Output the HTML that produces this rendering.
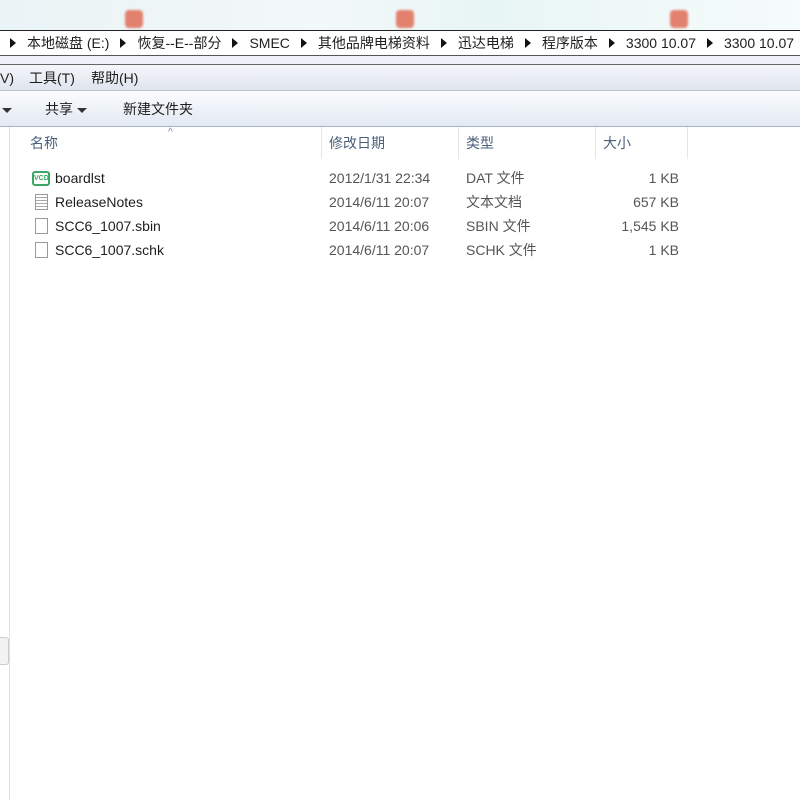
<!DOCTYPE html>
<html><head><meta charset="utf-8"><style>
body{margin:0;width:800px;height:800px;overflow:hidden;background:#fff;font-family:"Liberation Sans","Noto Sans CJK SC",sans-serif;font-size:14px;color:#1e1e1e;position:relative}
.a{position:absolute;white-space:nowrap}
.tri{display:inline-block;width:0;height:0;border-top:5px solid transparent;border-bottom:5px solid transparent;border-left:6px solid #111;margin:0 11px}
.dn{display:inline-block;border-left:5px solid transparent;border-right:5px solid transparent;border-top:5px solid #333;vertical-align:middle}
.row{position:absolute;left:0;height:24px;line-height:24px;width:800px}
.row span{position:absolute}
.ic{position:absolute;left:35px;top:4px;width:13px;height:16px;border:1px solid #999;background:#fff;box-sizing:border-box}
</style></head><body>
<div class="a" style="left:0;top:0;width:800px;height:30px;background:linear-gradient(90deg,#eaf3f6,#f3f8f8 40%,#e8f5f5 60%,#f6fbfb)"></div>
<div class="a" style="left:125px;top:10px;width:18px;height:18px;background:#e2826e;border-radius:4px;filter:blur(1px)"></div>
<div class="a" style="left:396px;top:10px;width:18px;height:18px;background:#e2826e;border-radius:4px;filter:blur(1px)"></div>
<div class="a" style="left:670px;top:10px;width:18px;height:18px;background:#e2826e;border-radius:4px;filter:blur(1px)"></div>
<div class="a" style="left:0;top:30px;width:800px;height:24px;background:#fff;border-top:1px solid #222;border-bottom:1px solid #555;line-height:24px;font-size:14px">
<span class="tri" style="margin-left:10px"></span>本地磁盘 (E:)<span class="tri"></span>恢复--E--部分<span class="tri"></span>SMEC<span class="tri"></span>其他品牌电梯资料<span class="tri"></span>迅达电梯<span class="tri"></span>程序版本<span class="tri"></span>3300 10.07<span class="tri"></span>3300 10.07</div>
<div class="a" style="left:0;top:56px;width:800px;height:8px;background:#eef2f8;border-bottom:1px solid #666"></div>
<div class="a" style="left:0;top:65px;width:800px;height:25px;background:linear-gradient(#f4f6fa,#dfe4ee);border-bottom:1px solid #b8c0cc;line-height:26px">
<span class="a" style="left:0">V)</span><span class="a" style="left:29px">工具(T)</span><span class="a" style="left:91px">帮助(H)</span></div>
<div class="a" style="left:0;top:91px;width:800px;height:35px;background:linear-gradient(#fbfcfe,#eef2f8 50%,#e3e9f3);border-bottom:1px solid #a9b4c6;line-height:36px">
<span class="a" style="left:2px"><span class="dn"></span></span>
<span class="a" style="left:45px">共享 <span class="dn"></span></span>
<span class="a" style="left:123px">新建文件夹</span></div>
<div class="a" style="left:9px;top:127px;width:1px;height:673px;background:#d6e2ee"></div>
<div class="a" style="left:0;top:637px;width:8px;height:26px;border:1px solid #ccc;border-left:none;background:#f2f2f2;border-radius:0 3px 3px 0"></div>
<div class="a" style="left:10px;top:127px;width:790px;height:32px;background:#fff;line-height:32px;color:#4c607a">
<span class="a" style="left:20px">名称</span>
<span class="a" style="left:158px;top:-10px;font-size:10px;color:#6a8ab0">^</span>
<span class="a" style="left:311px;top:0;width:1px;height:32px;background:#e2e6ee"></span>
<span class="a" style="left:319px">修改日期</span>
<span class="a" style="left:448px;top:0;width:1px;height:32px;background:#e2e6ee"></span>
<span class="a" style="left:456px">类型</span>
<span class="a" style="left:585px;top:0;width:1px;height:32px;background:#e2e6ee"></span>
<span class="a" style="left:593px">大小</span>
<span class="a" style="left:677px;top:0;width:1px;height:32px;background:#e2e6ee"></span>
</div>
<div class="row" style="top:166px"><div class="ic" style="left:32px;width:18px;height:15px;top:5px;background:#fff;border:2px solid #3aa864;border-radius:3px;font-size:7px;line-height:11px;color:#3aa864;font-weight:bold;text-align:center">VCD</div><span style="left:55px">boardlst</span><span style="left:329px;color:#555">2012/1/31 22:34</span><span style="left:466px;color:#555">DAT 文件</span><span style="left:603px;width:76px;text-align:right;color:#555">1 KB</span></div>
<div class="row" style="top:190px"><div class="ic" style="background:repeating-linear-gradient(#fff 0 2px,#aaa 2px 3px)"></div><span style="left:55px">ReleaseNotes</span><span style="left:329px;color:#555">2014/6/11 20:07</span><span style="left:466px;color:#555">文本文档</span><span style="left:603px;width:76px;text-align:right;color:#555">657 KB</span></div>
<div class="row" style="top:214px"><div class="ic"></div><span style="left:55px">SCC6_1007.sbin</span><span style="left:329px;color:#555">2014/6/11 20:06</span><span style="left:466px;color:#555">SBIN 文件</span><span style="left:603px;width:76px;text-align:right;color:#555">1,545 KB</span></div>
<div class="row" style="top:238px"><div class="ic"></div><span style="left:55px">SCC6_1007.schk</span><span style="left:329px;color:#555">2014/6/11 20:07</span><span style="left:466px;color:#555">SCHK 文件</span><span style="left:603px;width:76px;text-align:right;color:#555">1 KB</span></div>
</body></html>
